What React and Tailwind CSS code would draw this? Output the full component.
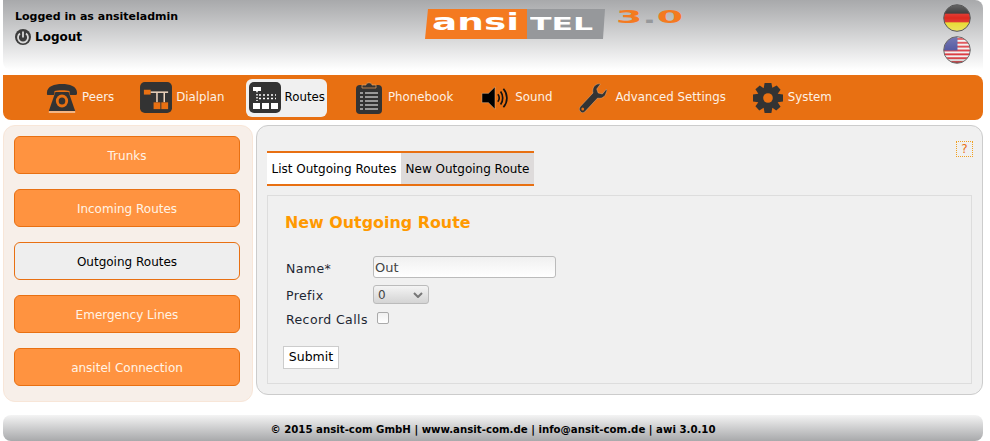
import React from 'react';

const PhoneIcon = () => (
  <svg width="32" height="30" viewBox="0 0 34 30" preserveAspectRatio="none">
    <path d="M1 10 C1 3 9 1 17 1 C25 1 33 3 33 10 C33 12 32 12 31 12 L26 12 C25 12 25 11 25 8 C22 7 12 7 9 8 C9 11 9 12 8 12 L3 12 C1 12 1 12 1 10 Z" fill="#333" />
    <path d="M10 9 H24 L31 28 H3 Z" fill="#333" />
    <circle cx="17" cy="18" r="6.500" fill="#e87012" />
    <circle cx="17" cy="18" r="3.500" fill="#333" />
    <path d="M3 29 H31" stroke="#fff" strokeWidth="1" />
  </svg>
);

const DialplanIcon = () => (
  <svg width="32" height="31" viewBox="0 0 33 32">
    <rect width="33" height="32" rx="5" fill="#333" />
    <rect x="4" y="8" width="7" height="5" fill="#e87012" />
    <path d="M11 10.500 H29" stroke="#f6dcc4" strokeWidth="1.500" />
    <path d="M17.500 11 V21 M25 11 V21" stroke="#f6dcc4" strokeWidth="1.500" />
    <rect x="14" y="21" width="7" height="7" fill="#e87012" />
    <rect x="22" y="21" width="7" height="7" fill="#e87012" />
  </svg>
);

const RoutesIcon = () => (
  <svg width="32" height="31" viewBox="0 0 32 31">
    <rect width="32" height="31" rx="5" fill="#333" />
    <path d="M4 5 H12 V9 H9 L8 11 L7 9 H4 Z" fill="#fff" />
    <path d="M10 13 H27 M10 16.500 H27" stroke="#fff" strokeWidth="1.500" strokeDasharray="2 2" />
    <path d="M8 12 V19" stroke="#fff" strokeWidth="1.500" strokeDasharray="1.500 1.500" />
    <rect x="4" y="21" width="7" height="6" fill="#fff" />
    <rect x="13" y="21" width="7" height="6" fill="#fff" />
    <rect x="22" y="21" width="7" height="6" fill="#fff" />
  </svg>
);

const PhonebookIcon = () => (
  <svg width="26" height="32" viewBox="0 0 26 32">
    <rect y="3" width="26" height="29" rx="4" fill="#333" />
    <path d="M6 3 H10 C10 0 16 0 16 3 H20 V6 H6 Z" fill="#333" stroke="#e8a060" strokeWidth="0.700" />
    <path d="M9 11 H22 M9 15 H22 M9 19 H22 M9 23 H22 M9 27 H22" stroke="#fff" strokeWidth="1.200" />
    <path d="M4 11 H7 M4 15 H7 M4 19 H7 M4 23 H7 M4 27 H7" stroke="#fff" strokeWidth="1.200" />
  </svg>
);

const SoundIcon = () => (
  <svg width="28" height="26" viewBox="0 0 30 26">
    <path d="M1 8 H8 L15 1 V25 L8 18 H1 Z" fill="#000" stroke="#f4c9a0" strokeWidth="0.500" />
    <path d="M18 9 C20 11 20 15 18 17 M21 6 C24 10 24 16 21 20 M24 3 C29 9 29 17 24 23" fill="none" stroke="#111" strokeWidth="1.800" />
  </svg>
);

const WrenchIcon = () => (
  <svg width="28" height="30" viewBox="0 0 30 30" preserveAspectRatio="none">
    <path d="M20 1 C16 2 14 6 15 10 L1 24 C0 26 0 27 2 29 C3 30 5 30 6 29 L20 15 C24 16 28 14 29 10 C30 8 30 7 29.500 6 L25 11 L20.500 10 L19 6 L23 1 C22 0.800 21 0.800 20 1 Z" fill="#333" stroke="#f4c9a0" strokeWidth="0.400" />
    <circle cx="4" cy="26" r="1.500" fill="#e87012" />
  </svg>
);

const GearIcon = () => (
  <svg width="30" height="30" viewBox="0 0 31 31">
    <path d="M12 0 H19 L20 5 L24.500 2.500 L28.500 7 L25.500 11 L31 12 V19 L25.500 20 L28.500 24.500 L24 28.500 L20 25.500 L19 31 H12 L11 25.500 L6.500 28.500 L2.500 24 L5.500 20 L0 19 V12 L5.500 11 L2.500 6.500 L7 2.500 L11 5.500 Z" fill="#333" />
    <circle cx="15.500" cy="15.500" r="5" fill="#e87012" />
  </svg>
);

const PowerIcon = () => (
  <svg width="16" height="16" viewBox="0 0 16 16">
    <circle cx="8" cy="8" r="8" fill="#3c3c3c" />
    <path d="M5 4.500 A5 5 0 1 0 11 4.500" fill="none" stroke="#d8d8d8" strokeWidth="1.800" />
    <path d="M8 2.500 V8.500" stroke="#d8d8d8" strokeWidth="1.800" />
  </svg>
);

const GermanFlag = () => (
  <svg width="28" height="28" viewBox="0 0 29 29">
    <defs>
      <clipPath id="deClip"><circle cx="14.500" cy="14.500" r="13.500" /></clipPath>
      <linearGradient id="deShine" x1="0" y1="0" x2="0" y2="1">
        <stop offset="0" stopColor="#fff" stopOpacity="0.300" />
        <stop offset="0.500" stopColor="#fff" stopOpacity="0" />
        <stop offset="1" stopColor="#fff" stopOpacity="0.300" />
      </linearGradient>
    </defs>
    <g clipPath="url(#deClip)">
      <rect width="29" height="11" fill="#2a2a2a" />
      <rect y="10" width="29" height="10" fill="#dd2a20" />
      <rect y="19" width="29" height="10" fill="#e6d820" />
      <rect width="29" height="29" fill="url(#deShine)" />
    </g>
    <circle cx="14.500" cy="14.500" r="13.800" fill="none" stroke="#555" />
  </svg>
);

const UsFlag = () => (
  <svg width="28" height="28" viewBox="0 0 29 29">
    <defs>
      <clipPath id="usClip"><circle cx="14.500" cy="14.500" r="13.500" /></clipPath>
      <linearGradient id="usShine" x1="0" y1="0" x2="0" y2="1">
        <stop offset="0" stopColor="#fff" stopOpacity="0.250" />
        <stop offset="0.700" stopColor="#fff" stopOpacity="0" />
        <stop offset="1" stopColor="#000" stopOpacity="0.300" />
      </linearGradient>
    </defs>
    <g clipPath="url(#usClip)">
      <rect width="29" height="29" fill="#f1f1f1" />
      {[2, 6, 10, 14, 18, 22, 26].map((y) => (
        <rect key={y} y={y} width="29" height="2" fill="#dc3a40" />
      ))}
      <rect width="15" height="15" fill="#4a4f9c" />
      <rect width="29" height="29" fill="url(#usShine)" />
    </g>
    <circle cx="14.500" cy="14.500" r="13.800" fill="none" stroke="#666" />
  </svg>
);

const navItems = [
  { label: 'Peers', icon: <PhoneIcon />, box: 'ml-[43px] gap-[4px]' },
  { label: 'Dialplan', icon: <DialplanIcon />, box: 'ml-[26px] gap-[4px]' },
  { label: 'Routes', icon: <RoutesIcon />, active: true, box: 'ml-[21px] pl-[3px] pr-[2px] gap-[4px]' },
  { label: 'Phonebook', icon: <PhonebookIcon />, box: 'ml-[29px] gap-[6px]' },
  { label: 'Sound', icon: <SoundIcon />, box: 'ml-[28px] gap-[6px]' },
  { label: 'Advanced Settings', icon: <WrenchIcon />, box: 'ml-[27px] gap-[8px]' },
  { label: 'System', icon: <GearIcon />, box: 'ml-[27px] gap-[5px]' },
];

const sideItems = [
  { label: 'Trunks' },
  { label: 'Incoming Routes' },
  { label: 'Outgoing Routes', active: true },
  { label: 'Emergency Lines' },
  { label: 'ansitel Connection' },
];

export default function App() {
  return (
    <div className="w-[990px] h-[441px] overflow-hidden bg-white text-[13px] text-black font-['DejaVu_Sans',sans-serif]">
      <header className="relative ml-[3px] w-[980px] h-[70px] rounded-bl-lg rounded-tr-lg bg-gradient-to-b from-[#a8a9ab] to-white flex justify-between">
        <div className="pl-[12px] pt-[10px] font-bold">
          <div className="text-[11px] leading-[14px]">Logged in as ansiteladmin</div>
          <div className="mt-[5px] flex items-center gap-[4px] text-[12px] leading-[16px]">
            <PowerIcon />
            <span>Logout</span>
          </div>
        </div>
        <div className="absolute left-[422px] top-[9px] flex items-start">
          <div className="w-[102px] h-[30px] bg-[#f47a20] text-white text-center font-bold text-[22px] leading-[27px] [clip-path:polygon(3px_0,100%_0,100%_100%,0_100%)]">
            <span className="inline-block scale-x-[1.7] scale-y-[1.05]">ansi</span>
          </div>
          <div className="w-[78px] h-[30px] bg-[#96989b] text-white font-bold text-[18px] leading-[30px] pl-[3px] [clip-path:polygon(0_0,100%_0,calc(100%-2px)_100%,0_100%)]">
            <span className="inline-block origin-left scale-x-[1.75]">TEL</span>
          </div>
          <div className="ml-[11px] mt-[-7px] text-[#f47a20] font-bold text-[18px] leading-[30px] origin-left scale-x-[2.100]">
            3<span className="text-[#96989b]">.</span>0
          </div>
        </div>
        <div className="pr-[12px] pt-[4px] flex flex-col gap-[4px]">
          <GermanFlag />
          <UsFlag />
        </div>
      </header>

      <nav className="mt-[5px] ml-[3px] w-[980px] h-[45px] rounded-bl-lg rounded-r-lg bg-[#e87012] flex items-center">
        {navItems.map((item) => (
          <div
            key={item.label}
            className={`flex items-center h-[38px] rounded-md text-[11.800px] ${item.box} ${item.active ? 'bg-[#f0f0f0] text-black' : 'text-[#fdf1e4]'}`}
          >
            {item.icon}
            <span>{item.label}</span>
          </div>
        ))}
      </nav>

      <div className="mt-[5px] ml-[3px] flex items-start gap-[3px]">
        <aside className="w-[250px] h-[277px] rounded-xl border border-[#f8e6d8] bg-[#f7efe9] pl-[10px] pr-[12px] pt-[10px] flex flex-col gap-[15px]">
          {sideItems.map((item) => (
            <div
              key={item.label}
              className={`h-[38px] pt-[2px] rounded-md border border-[#e87012] flex items-center justify-center text-[12px] ${item.active ? 'bg-[#eeeeee] text-black' : 'bg-[#ff9340] text-[#fff3e6]'}`}
            >
              {item.label}
            </div>
          ))}
        </aside>

        <main className="relative w-[727px] h-[270px] rounded-xl border border-[#cccccc] bg-[#f0f0f0] pl-[10px] pt-[25px]">
          <div className="absolute right-[9px] top-[15px] w-[17px] h-[16px] border border-dotted border-[#f0a020] flex items-center justify-center text-[12px] text-[#e87012]">
            ?
          </div>
          <div className="flex h-[35px] w-[267px] border-y-2 border-[#e87012] text-[12px] leading-[32px]">
            <div className="w-[134px] bg-white text-center">List Outgoing Routes</div>
            <div className="w-[133px] bg-[#dedbdb] text-center">New Outgoing Route</div>
          </div>
          <section className="mt-[9px] w-[705px] h-[189px] border border-[#dddddd] pl-[15px] pt-[17px]">
            <h1 className="pl-[2px] text-[15.900px] leading-[20px] font-bold text-[#ff9900]">New Outgoing Route</h1>
            <form className="mt-[23px]">
              <div className="pl-[3px] grid grid-cols-[87px_auto] text-[12.500px] tracking-[0.400px] text-[#1d2733]">
                <label className="h-[29px] pb-[2px] flex items-center">Name*</label>
                <div className="h-[29px]">
                  <div className="w-[183px] h-[22px] rounded-[3px] border border-[#bbbbbb] bg-gradient-to-b from-[#f0f0f0] to-white pl-[1px] text-[13px] tracking-normal leading-[21px] text-[#444]">
                    Out
                  </div>
                </div>
                <label className="h-[24px] pb-[2px] flex items-center">Prefix</label>
                <div className="h-[24px]">
                  <div className="w-[56px] h-[19px] rounded-[3px] border border-[#bbbbbb] bg-gradient-to-b from-[#f4f4f4] to-[#d4d4d4] pl-[4px] pr-[5px] flex items-center justify-between text-[12px] tracking-normal text-[#444]">
                    <span>0</span>
                    <svg width="10" height="6" viewBox="0 0 10 6">
                      <path d="M1 1 L5 5 L9 1" fill="none" stroke="#777" strokeWidth="2" />
                    </svg>
                  </div>
                </div>
                <label className="h-[24px] pb-[2px] flex items-center">Record Calls</label>
                <div className="h-[24px] pl-[4px] pt-[3px]">
                  <div className="w-[12px] h-[12px] rounded-[2px] border border-[#aaaaaa] bg-gradient-to-b from-[#f0f0f0] to-white" />
                </div>
              </div>
              <button type="button" className="mt-[13px] w-[56px] h-[23px] border border-[#cccccc] bg-white text-[12.500px] text-black">
                Submit
              </button>
            </form>
          </section>
        </main>
      </div>

      <footer className="mt-[13px] ml-[3px] w-[980px] h-[26px] rounded-lg bg-gradient-to-b from-[#f4f4f4] to-[#a8a9ab] flex items-center justify-center font-bold text-[10.200px] pt-[4px]">
        © 2015 ansit-com GmbH | www.ansit-com.de | info@ansit-com.de | awi 3.0.10
      </footer>
    </div>
  );
}
